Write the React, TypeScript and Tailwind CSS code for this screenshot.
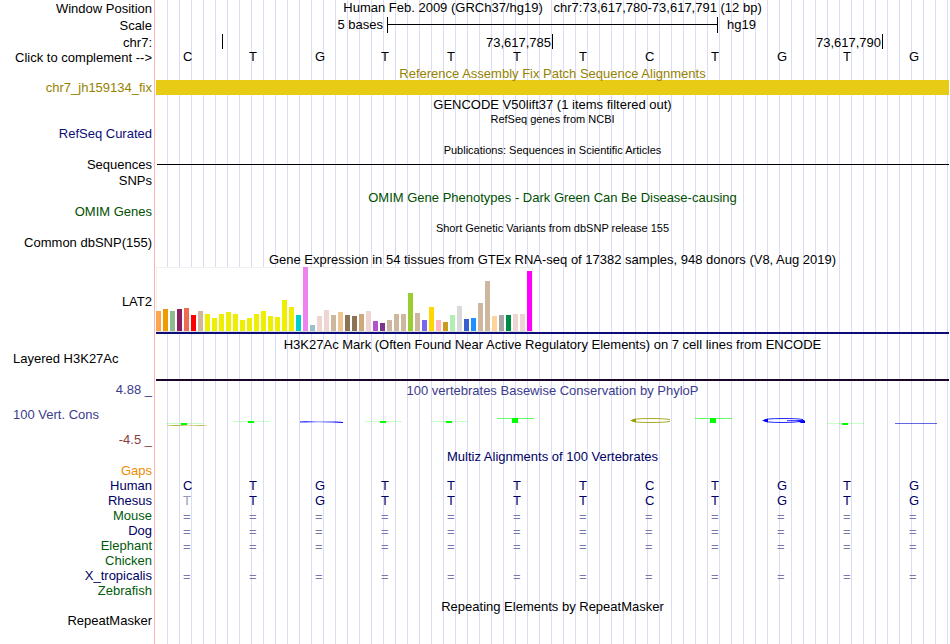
import React from "react";

type Item = { text: string; className: string };

const labels: Item[] = [
  { text: "Window Position", className: "h-[17px]" },
  { text: "Scale", className: "h-[17px]" },
  { text: "chr7:", className: "h-[15px]" },
  { text: "Click to complement -->", className: "h-[30px]" },
  { text: "chr7_jh159134_fix", className: "h-[46px] text-[#968200]" },
  { text: "RefSeq Curated", className: "h-[31px] text-[#0c0c78]" },
  { text: "Sequences", className: "h-4" },
  { text: "SNPs", className: "h-[31px]" },
  { text: "OMIM Genes", className: "h-[31px] text-[#005000]" },
  { text: "Common dbSNP(155)", className: "h-[59px]" },
  { text: "LAT2", className: "h-[57px]" },
  { text: "Layered H3K27Ac", className: "h-[31px] pl-[13px] text-left" },
  { text: "4.88 _", className: "h-[25px] text-[#3c3c8c]" },
  { text: "100 Vert. Cons", className: "h-[25px] pl-[13px] text-left text-[#3c3c8c]" },
  { text: "-4.5 _", className: "h-[31px] text-[#8c3c3c]" },
  { text: "Gaps", className: "h-[15px] text-[#f08c00]" },
  { text: "Human", className: "h-[15px] text-[#000064]" },
  { text: "Rhesus", className: "h-[15px] text-[#000064]" },
  { text: "Mouse", className: "h-[15px] text-[#005a0a]" },
  { text: "Dog", className: "h-[15px] text-[#000064]" },
  { text: "Elephant", className: "h-[15px] text-[#005a0a]" },
  { text: "Chicken", className: "h-[15px] text-[#005a0a]" },
  { text: "X_tropicalis", className: "h-[15px] text-[#000064]" },
  { text: "Zebrafish", className: "h-[30px] text-[#005a0a]" },
  { text: "RepeatMasker", className: "h-[15px]" },
];

const sequence = "CTGTTTTCTGTG";
const gapMarks = "============";

const tissues: [number, string][] = [
  [20, "#ffa54f"], [22, "#ee9a00"], [20, "#8fbc8f"], [22, "#8b1c62"], [23, "#ee6a50"], [16, "#ff0000"],
  [20, "#cdb79e"], [17, "#eeee00"], [13, "#eeee00"], [17, "#eeee00"], [19, "#eeee00"], [17, "#eeee00"],
  [11, "#eeee00"], [13, "#eeee00"], [17, "#eeee00"], [20, "#eeee00"], [15, "#eeee00"], [14, "#eeee00"],
  [31, "#eeee00"], [24, "#eeee00"], [16, "#00cdcd"], [64, "#ee82ee"], [6, "#9ac0cd"], [15, "#eed5d2"],
  [21, "#eed5d2"], [16, "#cdb79e"], [19, "#eec591"], [16, "#8b7355"], [15, "#8b7355"], [17, "#cdaa7d"],
  [20, "#eed5d2"], [10, "#b452cd"], [8, "#7a378b"], [11, "#cdb79e"], [17, "#cdb79e"], [17, "#cdb79e"],
  [38, "#9acd32"], [18, "#cdb79e"], [11, "#7a67ee"], [24, "#ffd700"], [11, "#ffb6c1"], [9, "#cd9b1d"],
  [16, "#b4eeb4"], [25, "#d9d9d9"], [12, "#3a5fcd"], [13, "#1e90ff"], [28, "#cdb79e"], [50, "#cdb79e"],
  [15, "#ffd39b"], [16, "#a6a6a6"], [16, "#008b45"], [17, "#eed5d2"], [17, "#eed5d2"], [60, "#ff00ff"],
];

function Title({ text, className = "" }: { text: string; className?: string }) {
  return <h2 className={`text-center whitespace-pre ${className}`}>{text}</h2>;
}

function Bases({ text, className = "" }: { text: string; className?: string }) {
  return (
    <div className={`mr-0.5 -ml-px grid h-[15px] grid-cols-12 ${className}`}>
      {text.split("").map((base, i) => (
        <span key={i} className="pl-7">
          {base}
        </span>
      ))}
    </div>
  );
}

function Expression() {
  return (
    <svg className="block h-[65px] w-[377px]" viewBox="0 0 377 65" shapeRendering="crispEdges" role="img" aria-label="Gene expression by tissue">
      <rect width="377" height="65" fill="#f0f0f0" />
      <rect x="1" y="1" width="375" height="63" fill="#fff" />
      <rect y="64" width="377" height="1" fill="#dcdcdc" />
      {tissues.map(([height, color], i) => (
        <rect key={i} x={i * 7} y={64 - height} width="5" height={height} fill={color} />
      ))}
    </svg>
  );
}

function LogoT({ x, y, tall = false }: { x: number; y: number; tall?: boolean }) {
  return (
    <g shapeRendering="crispEdges" fill="#00ff00">
      <rect x={x - 15} y={y} width="37" height="1" opacity={tall ? 0.6 : 0.22} />
      <rect x={x} y={y} width="6" height={tall ? 5 : 2} />
    </g>
  );
}

function Conservation() {
  return (
    <svg className="block h-4 w-full" viewBox="0 0 793 16" preserveAspectRatio="none" role="img" aria-label="Conservation logo">
      <defs>
        <linearGradient id="olive">
          <stop offset="0" stopColor="#999900" stopOpacity="0.3" />
          <stop offset="0.2" stopColor="#999900" stopOpacity="0.8" />
          <stop offset="0.55" stopColor="#999900" stopOpacity="0.3" />
          <stop offset="0.85" stopColor="#999900" stopOpacity="0.7" />
          <stop offset="1" stopColor="#999900" stopOpacity="0.2" />
        </linearGradient>
        <linearGradient id="blue">
          <stop offset="0" stopColor="#0000ff" stopOpacity="0.5" />
          <stop offset="0.12" stopColor="#0000ff" stopOpacity="0.75" />
          <stop offset="0.4" stopColor="#0000ff" stopOpacity="0.3" />
          <stop offset="0.75" stopColor="#0000ff" stopOpacity="0.4" />
          <stop offset="1" stopColor="#0000ff" />
        </linearGradient>
      </defs>
      <LogoT x={25} y={11} />
      <rect x="11" y="13" width="40" height="1" fill="url(#olive)" />
      <LogoT x={92} y={9} />
      <path d="M144 9H177L187 10V11H173L165 10.6H147L144 11Z" fill="url(#blue)" />
      <LogoT x={224} y={9} />
      <LogoT x={290} y={9} />
      <LogoT x={356} y={6} tall />
      <path d="M514 7.6Q509 6.5 494 6.5Q476 6.5 476 8.5Q476 10.5 494 10.5Q509 10.5 514 9.4" fill="none" stroke="#999900" strokeOpacity="0.85" />
      <path d="M474 8.5L480 6.5V10.5Z" fill="#999900" />
      <LogoT x={554} y={6} tall />
      <path d="M647 7.6Q642 6.5 627 6.5Q608 6.5 608 8.5Q608 10.5 627 10.5Q641 10.5 648 8.7H631" fill="none" stroke="#0000ff" strokeOpacity="0.85" />
      <path d="M606 8.5L612 6.5V10.5ZM641 8.5H649V11H645Z" fill="#0000ff" />
      <LogoT x={686} y={11} />
      <rect x="739" y="11" width="42" height="1" fill="#0000cc" opacity="0.6" />
    </svg>
  );
}

export default function App() {
  return (
    <main className="flex min-h-screen bg-white font-['Liberation_Sans',Arial,sans-serif] text-[13px] leading-[15px] text-black">
      <aside className="w-[155px] shrink-0 border-r border-[#ffb4b4] pt-px pr-0.5 text-right whitespace-nowrap">
        {labels.map(({ text, className }) =>
          text.startsWith("Click") ? (
            <button key={text} type="button" className={`flex w-full items-start justify-end ${className}`}>
              {text}
            </button>
          ) : (
            <div key={text} className={className}>
              {text}
            </div>
          ),
        )}
      </aside>

      <section className="mr-px ml-px min-w-0 flex-1 bg-[repeating-linear-gradient(to_right,transparent_0px,transparent_11px,#dcdcf8_11px,#dcdcf8_12px)]">
        <Title text={"Human Feb. 2009 (GRCh37/hg19)   chr7:73,617,780-73,617,791 (12 bp)"} className="h-[17px]" />
        <div className="mr-px grid h-[17px] grid-cols-[7fr_10fr_7fr]">
          <span className="pr-1 text-right">5 bases</span>
          <div className="-mr-px h-4 border-x border-black pt-[7px]">
            <div className="h-px w-full bg-black" />
          </div>
          <span className="pl-2.5">hg19</span>
        </div>
        <div className="ml-px grid h-[15px] grid-cols-[1fr_5fr_5fr_1fr] text-right">
          <span className="h-[15px] border-r border-black" />
          <span className="h-[15px] border-r border-black pt-px pr-px">73,617,785</span>
          <span className="h-[15px] border-r border-black pt-px pr-px">73,617,790</span>
        </div>
        <Bases text={sequence} />
        <Title text="Reference Assembly Fix Patch Sequence Alignments" className="mt-0.5 h-3.5 text-[#968200]" />
        <div className="h-[15px] bg-[#e8cb15]" />
        <Title text="GENCODE V50lift37 (1 items filtered out)" className="mt-0.5 h-4" />
        <Title text="RefSeq genes from NCBI" className="h-[31px] text-[11px] leading-[13px]" />
        <Title text="Publications: Sequences in Scientific Articles" className="h-5 text-[11px] leading-[13px]" />
        <div className="ml-px h-px bg-black" />
        <Title text="OMIM Gene Phenotypes - Dark Green Can Be Disease-causing" className="mt-[25px] h-8 text-[#005000]" />
        <Title text="Short Genetic Variants from dbSNP release 155" className="h-[30px] text-[11px] leading-[13px]" />
        <Title text="Gene Expression in 54 tissues from GTEx RNA-seq of 17382 samples, 948 donors (V8, Aug 2019)" className="h-[15px]" />
        <Expression />
        <div className="h-0.5 bg-[#0c0c78]" />
        <Title text="H3K27Ac Mark (Often Found Near Active Regulatory Elements) on 7 cell lines from ENCODE" className="mt-[3px] h-[42px]" />
        <div className="h-0.5 bg-[#1c0628]" />
        <Title text="100 vertebrates Basewise Conservation by PhyloP" className="mt-0.5 h-[29px] text-[#3c3c8c]" />
        <Conservation />
        <Title text="Multiz Alignments of 100 Vertebrates" className="mt-[21px] h-[29px] text-[#000064]" />
        <div className="text-[#000064]">
          <Bases text={sequence} />
          <Bases text={"T" + sequence.slice(1)} className="[&>:first-child]:text-[#9696c0]" />
          <div className="pt-px text-[#7878ac]">
            <Bases text={gapMarks} />
            <Bases text={gapMarks} />
            <Bases text={gapMarks} className="mb-[15px]" />
            <Bases text={gapMarks} />
          </div>
        </div>
        <Title text="Repeating Elements by RepeatMasker" className="mt-[15px]" />
      </section>
    </main>
  );
}
